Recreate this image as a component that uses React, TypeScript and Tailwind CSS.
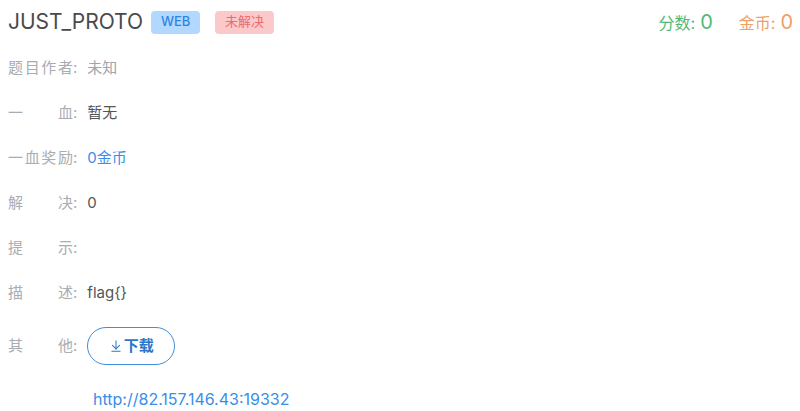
import React from "react";
import { ArrowDownToLine } from "lucide-react";

const rows: { label: string; value: React.ReactNode }[] = [
  { label: "题目作者", value: <span className="text-[#a0a4ab]">未知</span> },
  { label: "一血", value: <span className="text-[#555]">暂无</span> },
  { label: "一血奖励", value: <span className="text-[#3a8ee6]">0金币</span> },
  { label: "解决", value: <span className="text-[#555]">0</span> },
  { label: "提示", value: null },
  { label: "描述", value: <span className="text-[#555]">{"flag{}"}</span> },
];

function Label({ text }: { text: string }) {
  return (
    <span className="flex shrink-0 text-[#a9acb2]">
      <span className="w-[65px] [text-align-last:justify]">{text}</span>
      <span>:</span>
    </span>
  );
}

export default function App() {
  return (
    <div className="w-[800px] h-[411px] bg-white font-['Inter','Noto_Sans_CJK_SC',sans-serif] text-[15px] overflow-hidden">
      <div className="flex items-center h-[44px] pl-[8px] pr-[7px]">
        <span className="text-[21px] text-[#4a4a4a]">JUST_PROTO</span>
        <span className="ml-[8px] h-[23px] w-[49px] justify-center flex items-center rounded-[4px] bg-[#b3d8ff] text-[#2f86e0] text-[13px] font-medium">
          WEB
        </span>
        <span className="ml-[15px] h-[23px] w-[59px] justify-center flex items-center rounded-[4px] bg-[#fbc9c9] text-[#ec6b6b] text-[13px]">
          未解决
        </span>
        <div className="ml-auto flex items-baseline">
          <span className="text-[16px] text-[#4fba78]">分数:</span>
          <span className="ml-[5px] text-[20px] text-[#4fba78]">0</span>
          <span className="ml-[26px] text-[16px] text-[#eda06a]">金币:</span>
          <span className="ml-[5px] text-[20px] text-[#eda06a]">0</span>
        </div>
      </div>
      <div className="pl-[8px] flex flex-col">
        {rows.map((r) => (
          <div key={r.label} className="flex items-center h-[45px] first:mt-[2px]">
            <Label text={r.label} />
            <span className="ml-[10px]">{r.value}</span>
          </div>
        ))}
        <div className="flex items-center h-[62px] mt-[-1px]">
          <Label text="其他" />
          <button className="ml-[10px] w-[88px] h-[38px] rounded-full border border-[#3f8fd9] flex items-center justify-center text-[#2a77c9] font-bold text-[15px]">
            <ArrowDownToLine className="w-[14px] h-[14px] mr-[1px]" strokeWidth={1.8} />
            下载
          </button>
        </div>
        <div className="pl-[85px] pt-[10px] text-[#3a8ee6] text-[16px]">
          http://82.157.146.43:19332
        </div>
      </div>
    </div>
  );
}
